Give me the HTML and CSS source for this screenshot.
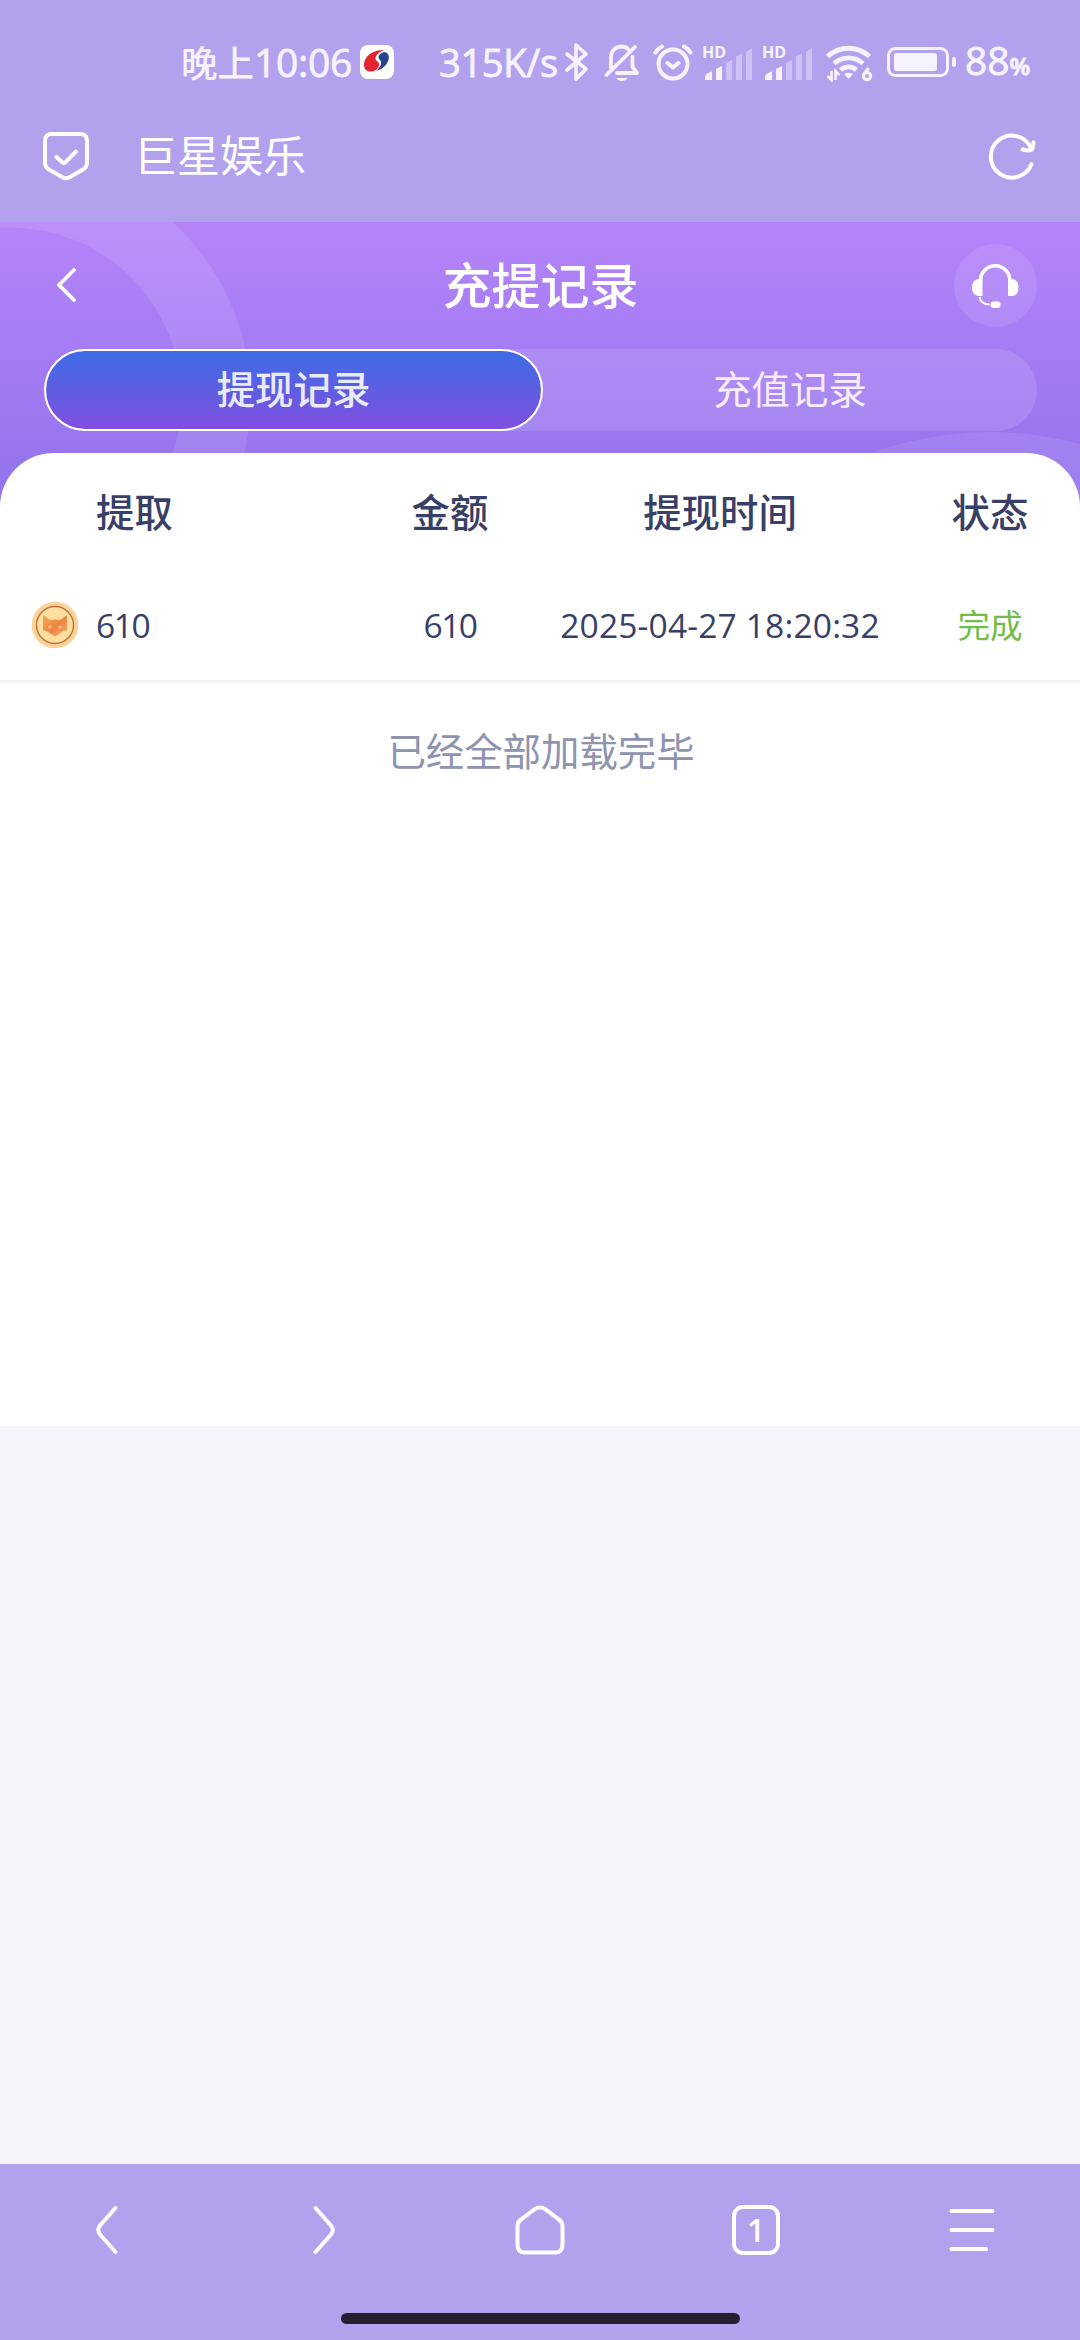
FILE: index.html
```html
<!DOCTYPE html>
<html lang="zh-CN">
<head>
<meta charset="utf-8">
<title>充提记录</title>
<link rel="stylesheet" href="styles.css">
</head>
<body>
<div class="screen">
  <div class="status">
    <span class="clock">晚上<span class="clock-num">10:06</span></span>
    <svg class="app-badge" viewBox="0 0 34 34"><rect width="34" height="34" rx="8" fill="#fff"/><path d="M24 5.500C14 4 4 11 4 20c0 6 6 8 11 5.500 4.500-2.500 5.500-7 2-9.500-3.500-2.500-1-8 7-10.500z" fill="#e5222f"/><path d="M24 7c6 .5 6 7 2.500 12-2.500 3.600-7.500 6.500-10.500 6.800 4.600-3.700 6.500-8 4-10.800-3-2.600-1-6.500 4-8z" fill="#26418f"/></svg>
    <span class="speed">315K/s</span>
    <svg class="bt" viewBox="0 0 24 40" fill="none" stroke="currentColor" stroke-width="3.600" stroke-linecap="round" stroke-linejoin="round"><path d="M2 12l19 15-10 10V3l10 9L2 28"/></svg>
    <svg class="bell" viewBox="0 0 36 40" fill="none" stroke="currentColor" stroke-width="3.800" stroke-linecap="round" stroke-linejoin="round"><path d="M7 26V15c0-6 4.500-10.500 10.500-10.500 3 0 5 1 7 2.800M28.500 15v10l4.500 6H13"/><path d="M31 5L2.500 33"/><path d="M12.500 36h11c-1 2-3 3-5.500 3s-4.500-1-5.500-3z" fill="currentColor" stroke="none"/></svg>
    <svg class="alarm" viewBox="0 0 40 40" fill="none" stroke="currentColor" stroke-width="4" stroke-linecap="round" stroke-linejoin="round"><circle cx="20" cy="22" r="14.500"/><path d="M14.500 21l5.500 4.500 5.500-4.500M2.500 10.500C4 8 6 6 9 4.500M31 4.500c3 1.500 5 3.500 6.500 6"/></svg>
    <span class="signal"><b>HD</b>
      <svg viewBox="0 0 50 36"><g fill="currentColor"><path d="M2 36v-3.500q1-3.500 7-5V36z"/><path d="M13 36V25l6-3v14z"/><g opacity=".4"><path d="M23 36V19l6-3v20zM33 36V12.500l6-3V36zM43 36V8l6-4v32z"/></g></g></svg></span>
    <span class="signal"><b>HD</b>
      <svg viewBox="0 0 50 36"><g fill="currentColor"><path d="M2 36v-3.500q1-3.500 7-5V36z"/><path d="M13 36V25l6-3v14z"/><g opacity=".4"><path d="M23 36V19l6-3v20zM33 36V12.500l6-3V36zM43 36V8l6-4v32z"/></g></g></svg></span>
    <svg class="wifi" viewBox="0 0 48 40"><g fill="none" stroke="currentColor" stroke-width="4.800"><path d="M2.500 14.500c12-11 30-11 42 0M9 21.500c9-7.500 20-7.500 29 0M15.500 28c5-4 11-4 16 0"/></g><path d="M19 32q4.500-2.500 9 0l-4.500 5z" fill="currentColor"/><path d="M6.500 29v9l-4-4M10.500 38v-9l4 4" fill="none" stroke="currentColor" stroke-width="2.600"/><g fill="none" stroke="currentColor" stroke-width="3.200"><circle cx="42" cy="34" r="3.600"/><path d="M43.500 26l-4.300 6"/></g></svg>
    <svg class="battery" viewBox="0 0 70 30"><rect x="1.500" y="1.500" width="59" height="27" rx="7" fill="none" stroke="currentColor" stroke-width="3"/><rect x="7" y="6" width="43" height="18" rx="2.500" fill="currentColor"/><rect x="65" y="10" width="4" height="10" rx="2" fill="currentColor"/></svg>
    <span class="level">88<small>%</small></span>
  </div>

  <div class="browser-bar">
    <svg class="shield" viewBox="0 0 48 50" fill="none" stroke="#fff" stroke-width="4" stroke-linecap="round" stroke-linejoin="round"><path d="M10 3h28q7 0 7 7v22q0 4-4 6.500L28 46q-4 2.500-8 0L7 38.500Q3 36 3 32V10q0-7 7-7z"/><path d="M14.500 26l6 5.500q1.500 1 3-.3L34 20.500"/></svg>
    <span class="site">巨星娱乐</span>
    <svg class="refresh" viewBox="0 0 48 48" fill="none" stroke="#fff" stroke-width="4" stroke-linecap="round" stroke-linejoin="round"><path d="M43.500 32A21 21 0 1 1 42.500 15"/><path d="M34.500 17.500q6.500 2 9 .3 2-1.500 2-7.500"/></svg>
  </div>

  <header class="hero">
    <svg class="hero-art" viewBox="0 0 1080 300"><circle cx="10" cy="177" r="206" fill="none" stroke="#fff" stroke-opacity=".1" stroke-width="69"/><circle cx="990" cy="555" r="345" fill="#fff" fill-opacity=".09"/></svg>
    <div class="title-row">
      <svg class="back" viewBox="0 0 20 34" fill="none" stroke="#fff" stroke-width="3.800" stroke-linecap="round" stroke-linejoin="round"><path d="M18 2L3 17 18 32"/></svg>
      <h1>充提记录</h1>
      <span class="service"><svg viewBox="0 0 48 46" fill="none" stroke="#fff"><path d="M9.500 20v-2.500a14.700 14.700 0 0 1 29.400 0V20" stroke-width="3.600"/><path d="M11.500 16v17H7q-6-1-6-8.500T7 16zM37 16v17h4.500q6-1 6-8.500t-6-8.500z" fill="#fff" stroke="none"/><path d="M8.500 34q1.500 7.500 10 7.500" stroke-width="2"/><rect x="19.500" y="38.500" width="10" height="6.500" rx="3" fill="#fff" stroke="none"/></svg></span>
    </div>
    <div class="tabs"><span class="tab active">提现记录</span><span class="tab">充值记录</span></div>
  </header>

  <main class="panel">
    <div class="cells head"><span class="first">提取</span><span>金额</span><span>提现时间</span><span>状态</span></div>
    <div class="cells row">
      <span class="first"><svg class="coin" viewBox="0 0 48 48"><defs><linearGradient id="fox" x1="0" y1="0" x2="1" y2="1"><stop offset="0" stop-color="#f3aa58"/><stop offset=".55" stop-color="#ee8442"/><stop offset="1" stop-color="#f6b16b"/></linearGradient></defs><circle cx="24" cy="24" r="23.300" fill="#fad196"/><circle cx="24" cy="24" r="18.500" fill="#ffdfa0" stroke="#bd7042" stroke-width="1.400"/><path d="M12 14l7 5q5-1 10 0l7-5v15l-5 2-7 4.500-7-4.500-5-2z" fill="url(#fox)"/><circle cx="19" cy="26" r="1.300" fill="#ffd8a0"/><circle cx="29" cy="26" r="1.300" fill="#ffd8a0"/></svg><span class="amount">610</span></span>
      <span class="amount">610</span><span class="time">2025-04-27 18:20:32</span><span class="done">完成</span>
    </div>
    <p class="end">已经全部加载完毕</p>
  </main>

  <footer class="nav">
    <div class="nav-items">
      <svg viewBox="0 0 50 50"><path d="M32.500 3L17 20.500q-3.500 4.500 0 9L32.500 47"/></svg>
      <svg viewBox="0 0 50 50"><path d="M16.500 3L32 20.500q3.500 4.500 0 9L16.500 47"/></svg>
      <svg viewBox="0 0 50 50"><path d="M10 47.500q-7.500 0-7.500-8V22q0-5 3.500-7.500L19.500 4.300q5.500-3.600 11 0L44 14.500q3.500 2.500 3.500 7.500v17.500q0 8-7.500 8z"/></svg>
      <span class="count">1</span>
      <svg viewBox="0 0 50 50"><path d="M4.500 6h41M4.500 25h41M4.500 44h34.500"/></svg>
    </div>
    <div class="pill"></div>
  </footer>
</div>
</body>
</html>
```
FILE: styles.css
```css
* { box-sizing: border-box; }
body { margin: 0; font-family: "Open Sans", "Noto Sans CJK SC", sans-serif; color: #384068; }
svg { display: block; flex: none; }
.screen { width: 1080px; height: 2340px; display: flex; flex-direction: column; background: #f5f4fb; overflow: hidden; }

.status { height: 124px; padding-left: 181px; display: flex; align-items: center; background: #b2a2ee; color: #f6f2ff; font-weight: 500; white-space: nowrap; }
.clock { width: 179px; font-size: 36.500px; line-height: 60px; }
.clock-num, .speed, .level { -webkit-text-stroke: .8px currentColor; }
.clock-num { font-size: 39px; letter-spacing: -.3px; }
.app-badge { width: 34px; height: 34px; }
.speed { width: 119px; margin-left: 45px; font-size: 38px; line-height: 60px; letter-spacing: -.3px; }
.bt { width: 24px; height: 40px; margin-left: 7px; }
.bell { width: 36px; height: 40px; margin-left: 15px; }
.alarm { width: 40px; height: 40px; margin-left: 13px; }
.signal { position: relative; width: 50px; height: 36px; margin: -1px 0 0 10px; }
.signal svg { width: 50px; height: 36px; }
.signal b { position: absolute; left: -1px; top: 0; font: 700 16px/16px "Open Sans", sans-serif; }
.wifi { width: 48px; height: 40px; margin-left: 12px; }
.battery { width: 70px; height: 30px; margin-left: 14px; }
.level { margin: 2px 0 0 8px; font-size: 39px; line-height: 60px; }
.level small { font-size: 24px; font-weight: 600; }

.browser-bar { height: 98px; padding: 2px 44px 36px 42px; display: flex; align-items: center; background: #b2a2ee; color: #fff; }
.shield { width: 48px; height: 50px; }
.site { flex: 1; margin-left: 44px; font-size: 43px; line-height: 60px; }
.refresh { width: 48px; height: 48px; }

.hero { position: relative; height: 300px; flex: none; padding: 22px 43px 0 44px; background: linear-gradient(#b684f9, #9575ee 80%); color: #fff; }
.hero-art { position: absolute; inset: 0; width: 1080px; height: 300px; }
.title-row { position: relative; height: 83px; display: flex; align-items: center; justify-content: space-between; padding-left: 12px; }
.back { width: 20px; height: 34px; margin: 0 51px 2px 0; }
.title-row h1 { margin: 0; padding-bottom: 2px; font-size: 49px; line-height: 70px; font-weight: 500; }
.service { width: 83px; height: 83px; border-radius: 50%; background: rgba(255,255,255,.1); display: grid; place-items: center; }
.service svg { width: 48px; height: 46px; }
.tabs { position: relative; height: 82px; margin-top: 22px; display: flex; border-radius: 41px; background: rgba(255,255,255,.12); }
.tab { flex: 1; border-radius: 41px; text-align: center; font-size: 38.400px; line-height: 76px; border: 2px solid transparent; color: #f8edff; }
.tab.active { flex: 0 0 499px; border-color: #fff; background: linear-gradient(#3d6ce5, #804fe0) padding-box; color: #eaeaff; font-weight: 500; }

.panel { position: relative; height: 973px; margin-top: -69px; flex: none; background: #fff; border-radius: 54px 54px 0 0; }
.cells { display: grid; grid-template-columns: 360px 180px 360px 180px; align-items: center; text-align: center; }
.cells .first { display: flex; align-items: center; text-align: left; }
.head { height: 116px; padding-bottom: 3px; font-size: 38.400px; font-weight: 500; }
.head .first { padding-left: 96px; }
.row { height: 114px; border-bottom: 3px solid #f4f4f4; font-size: 33.600px; }
.row .first { padding-left: 31px; }
.coin { width: 48px; height: 48px; margin-right: 17px; }
.amount { letter-spacing: -1.500px; }
.time { letter-spacing: .15px; }
.done { padding-bottom: 2px; color: #72bd48; font-size: 32.600px; }
.end { margin: 38px 0 0; padding-left: 2px; text-align: center; font-size: 38.400px; line-height: 60px; color: #8e93b0; }

.nav { height: 176px; margin-top: auto; background: #b2a2ee; }
.nav-items { height: 132px; display: grid; grid-template-columns: repeat(5, 1fr); align-items: center; justify-items: center; }
.nav-items svg { width: 50px; height: 50px; fill: none; stroke: #fff; stroke-width: 4; stroke-linecap: round; stroke-linejoin: round; }
.count { width: 48px; height: 50px; border: 4px solid #fff; border-radius: 11px; color: #fff; text-align: center; font-size: 32px; line-height: 41px; font-weight: 600; }
.pill { width: 399px; height: 11px; margin: 17px auto 0; border-radius: 6px; background: #24202f; }
```
